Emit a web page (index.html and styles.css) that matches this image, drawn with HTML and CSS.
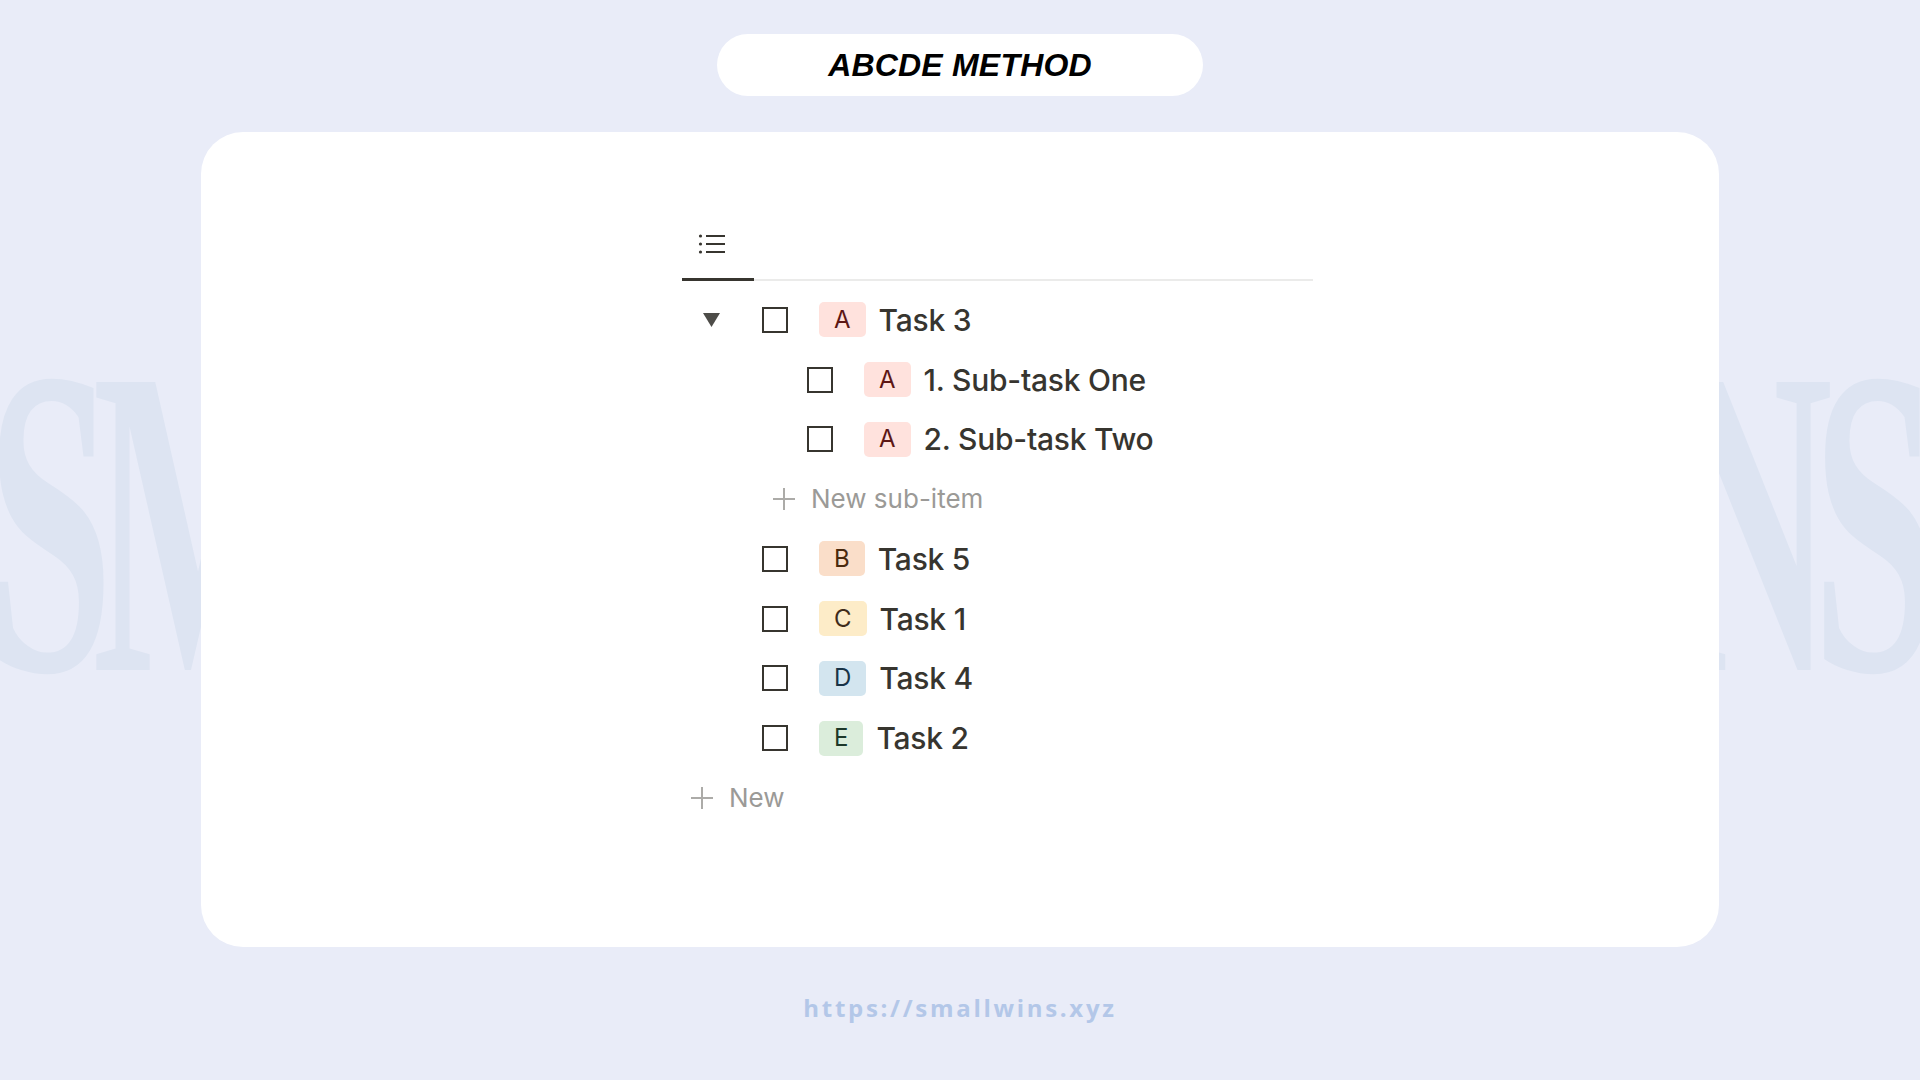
FILE: index.html
```html
<!DOCTYPE html>
<html lang="en">
<head>
<meta charset="utf-8">
<title>ABCDE Method</title>
<link rel="stylesheet" href="styles.css">
</head>
<body>
<div class="wm wm-left" aria-hidden="true">SM</div>
<div class="wm wm-right" aria-hidden="true">NS</div>

<header class="title-pill"><h1>ABCDE METHOD</h1></header>

<main class="card">
  <div class="board">
    <div class="tabs">
      <div class="tab">
        <svg class="list-icon" width="28" height="20" viewBox="0 0 28 20">
          <circle cx="2.5" cy="2" r="1.6"/>
          <circle cx="2.5" cy="10" r="1.6"/>
          <circle cx="2.5" cy="18" r="1.6"/>
          <path d="M8 2H27M8 10H27M8 18H27"/>
        </svg>
      </div>
    </div>

    <div class="rows">
      <div class="row">
        <span class="toggle"><svg width="17" height="14" viewBox="0 0 17 14"><path d="M0 0H17L8.5 14Z"/></svg></span>
        <span class="check"></span>
        <span class="badge badge-a">A</span>
        <span class="label">Task 3</span>
      </div>
      <div class="row sub">
        <span class="check"></span>
        <span class="badge badge-a">A</span>
        <span class="label">1. Sub-task One</span>
      </div>
      <div class="row sub">
        <span class="check"></span>
        <span class="badge badge-a">A</span>
        <span class="label">2. Sub-task Two</span>
      </div>
      <div class="row add add-sub">
        <svg class="plus" width="22" height="22" viewBox="0 0 22 22"><path d="M11 0V22M0 11H22"/></svg>
        <span class="add-label">New sub-item</span>
      </div>
      <div class="row task">
        <span class="check"></span>
        <span class="badge badge-b">B</span>
        <span class="label">Task 5</span>
      </div>
      <div class="row task">
        <span class="check"></span>
        <span class="badge badge-c">C</span>
        <span class="label">Task 1</span>
      </div>
      <div class="row task">
        <span class="check"></span>
        <span class="badge badge-d">D</span>
        <span class="label">Task 4</span>
      </div>
      <div class="row task">
        <span class="check"></span>
        <span class="badge badge-e">E</span>
        <span class="label">Task 2</span>
      </div>
      <div class="row add add-new">
        <svg class="plus" width="22" height="22" viewBox="0 0 22 22"><path d="M11 0V22M0 11H22"/></svg>
        <span class="add-label">New</span>
      </div>
    </div>
  </div>
</main>

<footer class="url">https://smallwins.xyz</footer>
</body>
</html>
```

FILE: styles.css
```css
html, body {
  margin: 0;
  padding: 0;
}

body {
  position: relative;
  width: 1920px;
  height: 1080px;
  overflow: hidden;
  background: #e9ecf8;
  font-family: "Inter", "Noto Sans", sans-serif;
}

/* background watermark */
.wm {
  position: absolute;
  top: 302px;
  z-index: 0;
  font-family: "Liberation Serif", serif;
  font-weight: 700;
  font-size: 440px;
  line-height: 440px;
  color: #dde4f2;
  letter-spacing: -40px;
  white-space: nowrap;
}

.wm-left {
  left: -14px;
  transform: scaleX(0.52);
  transform-origin: left top;
}

.wm-right {
  right: 2px;
  transform: scaleX(0.52);
  transform-origin: right top;
}

/* title */
.title-pill {
  position: relative;
  z-index: 1;
  width: 486px;
  height: 62px;
  margin: 34px auto 0;
  background: #ffffff;
  border-radius: 31px;
  display: flex;
  align-items: center;
  justify-content: center;
}

.title-pill h1 {
  margin: 0;
  font-family: "Liberation Sans", Arial, sans-serif;
  font-style: italic;
  font-weight: 700;
  font-size: 32px;
  line-height: 1;
  letter-spacing: 0.2px;
  color: #000000;
}

/* card */
.card {
  position: relative;
  z-index: 1;
  display: block;
  width: 1518px;
  height: 815px;
  margin: 36px auto 0;
  box-sizing: border-box;
  padding: 90px 0 0 481px;
  background: #ffffff;
  border-radius: 42px;
}

.board {
  width: 631px;
}

.tabs {
  display: flex;
  border-bottom: 2px solid #ebebea;
  margin-bottom: 9px;
}

.tab {
  width: 72px;
  height: 59px;
  box-sizing: border-box;
  padding: 12px 0 0 16px;
  border-bottom: 3px solid #37352f;
  margin-bottom: -2px;
}

.list-icon {
  display: block;
  fill: #37352f;
}

.list-icon path {
  stroke: #37352f;
  stroke-width: 2;
  fill: none;
}

/* rows */
.row {
  display: flex;
  align-items: center;
  height: 59.75px;
}

.toggle {
  width: 80px;
  flex: none;
  display: flex;
  align-items: center;
}

.toggle svg {
  display: block;
  margin-left: 21px;
  fill: #4d4c48;
}

.row.task {
  padding-left: 80px;
}

.row.sub {
  padding-left: 125px;
}

.check {
  flex: none;
  width: 26px;
  height: 26px;
  box-sizing: border-box;
  border: 2.5px solid #37352f;
  margin-right: 31px;
}

.badge {
  flex: none;
  height: 35px;
  padding: 0 15px;
  border-radius: 5px;
  display: flex;
  align-items: center;
  font-size: 24px;
  line-height: 1;
  margin-right: 13px;
}

.badge-a { background: #ffe2dd; color: #5d1715; }
.badge-b { background: #fadec9; color: #49290e; }
.badge-c { background: #fdecc8; color: #402c1b; }
.badge-d { background: #d3e5ef; color: #183347; }
.badge-e { background: #dbeddb; color: #1c3829; }

.label {
  font-size: 30px;
  font-weight: 500;
  line-height: 1;
  color: #37352f;
  letter-spacing: -0.25px;
  white-space: nowrap;
}

.add .plus {
  display: block;
  flex: none;
  stroke: #acaba8;
  stroke-width: 2;
  fill: none;
  margin-right: 16px;
}

.add-sub {
  padding-left: 91px;
}

.add-new {
  padding-left: 9px;
}

.add-label {
  font-size: 26px;
  line-height: 1;
  color: #9b9a97;
  white-space: nowrap;
}

/* footer url */
.url {
  position: relative;
  z-index: 1;
  margin-top: 45px;
  text-align: center;
  font-family: "Open Sans", sans-serif;
  font-weight: 700;
  font-size: 24px;
  line-height: 32px;
  letter-spacing: 2.7px;
  color: #b3c7e8;
}
```
